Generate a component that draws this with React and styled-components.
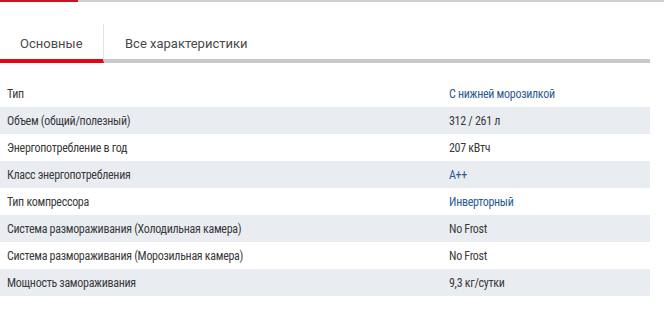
import React from 'react';
import styled, { createGlobalStyle } from 'styled-components';

const GlobalStyle = createGlobalStyle`
  body {
    margin: 0;
    background: #fff;
    font-family: Roboto, "Noto Sans", sans-serif;
  }
`;

const TopStrip = styled.div`
  display: flex;
  height: 2px;
`;

const StripPart = styled.div`
  width: ${props => props.width || 'auto'};
  flex: ${props => (props.width ? '0 0 auto' : '1')};
  background: ${props => props.color};
`;

const TabList = styled.div`
  display: flex;
  width: 650px;
  margin-top: 22px;
  border-bottom: 4px solid #c9c9c9;
`;

const Tab = styled.div`
  height: 23px;
  padding: 12px 0 0 ${props => props.padLeft}px;
  width: ${props => (props.width ? `${props.width - props.padLeft - 1}px` : 'auto')};
  margin-bottom: ${props => (props.active ? '-4px' : '0')};
  border-bottom: ${props => (props.active ? '4px solid #e30613' : 'none')};
  border-right: ${props => (props.divider ? '1px solid #e4e4e4' : 'none')};
  font-size: 13px;
  line-height: 16px;
  color: #4a4a4a;
  white-space: nowrap;
`;

const Table = styled.div`
  width: 650px;
  margin-top: 17px;
`;

const Row = styled.div`
  display: grid;
  grid-template-columns: 449px 1fr;
  height: 27px;
  align-items: center;
  background: ${props => (props.shaded ? '#e9edf2' : 'transparent')};
  font-family: "Liberation Sans Narrow", "Roboto Condensed", "Open Sans Condensed", "DejaVu Sans Condensed", sans-serif;
  font-size: 12px;
  letter-spacing: -0.3px;
`;

const Label = styled.div`
  padding-left: 7px;
  color: #3a3a3a;
`;

const Value = styled.div`
  color: ${props => (props.link ? '#2d5a94' : '#3a3a3a')};
`;

const specs = [
  { label: 'Тип', value: 'С нижней морозилкой', link: true },
  { label: 'Объем (общий/полезный)', value: '312 / 261 л' },
  { label: 'Энергопотребление в год', value: '207 кВтч' },
  { label: 'Класс энергопотребления', value: 'A++', link: true },
  { label: 'Тип компрессора', value: 'Инверторный', link: true },
  { label: 'Система размораживания (Холодильная камера)', value: 'No Frost' },
  { label: 'Система размораживания (Морозильная камера)', value: 'No Frost' },
  { label: 'Мощность замораживания', value: '9,3 кг/сутки' },
];

export default function App() {
  return (
    <>
      <GlobalStyle />
      <TopStrip>
        <StripPart width="78px" color="#d0121f" />
        <StripPart color="#cfcfcf" />
      </TopStrip>
      <TabList>
        <Tab active divider width={104} padLeft={20}>Основные</Tab>
        <Tab padLeft={21}>Все характеристики</Tab>
      </TabList>
      <Table>
        {specs.map((s, i) => (
          <Row key={s.label} shaded={i % 2 === 1}>
            <Label>{s.label}</Label>
            <Value link={s.link}>{s.value}</Value>
          </Row>
        ))}
      </Table>
    </>
  );
}
